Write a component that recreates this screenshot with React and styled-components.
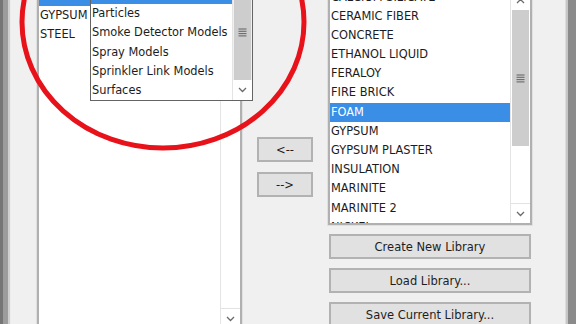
import React from "react";
import styled, { createGlobalStyle } from "styled-components";

const GlobalStyle = createGlobalStyle`
  html, body {
    margin: 0;
    padding: 0;
    overflow: hidden;
    background: #f0f0f0;
  }
  body {
    font-family: "DejaVu Sans", Verdana, sans-serif;
  }
`;

const Screen = styled.div`
  position: relative;
  width: 576px;
  height: 324px;
  display: flex;
  overflow: hidden;
  background: #f0f0f0;
  color: #1c1c1c;
  font-size: 11.4px;
`;

const EdgeLeft = styled.div`
  flex: none;
  width: 11px;
  background: linear-gradient(
    to right,
    #767676 0 3px,
    #9c9c9c 3px 8px,
    #d0d0d0 8px 10px,
    #ebebeb 10px 11px
  );
`;

const EdgeRight = styled.div`
  flex: none;
  width: 11px;
  background: linear-gradient(
    to right,
    #dedede 0 1px,
    #c6c6c6 1px 3px,
    #8b8b8b 3px 11px
  );
`;

const Panel = styled.div`
  flex: 1;
  min-width: 0;
`;

const Columns = styled.div`
  display: grid;
  grid-template-columns: 205px 86px 204px;
  align-items: start;
  margin-top: -10px;
  padding-left: 26px;
`;

const Column = styled.div`
  position: relative;
  display: flex;
  flex-direction: column;
  gap: ${(p) => p.$gap || 0}px;
  padding-top: ${(p) => p.$top || 0}px;
`;

const ListBox = styled.div`
  display: flex;
  height: ${(p) => p.$height}px;
  box-sizing: border-box;
  background: #fff;
  border: 2px solid #b0b0b0;
  box-shadow: 0 0 0 1px #e0e0e0;
  overflow: hidden;
`;

const Rows = styled.div`
  flex: 1;
  min-width: 0;
  margin-top: ${(p) => p.$offset || 0}px;
`;

const Row = styled.div`
  height: 19.2px;
  line-height: 19.2px;
  padding-left: 1px;
  white-space: nowrap;
  overflow: hidden;
  background: ${(p) => (p.$selected ? "#3a8ee6" : "transparent")};
  color: ${(p) => (p.$selected ? "#fff" : "#1c1c1c")};
`;

const ScrollBar = styled.div`
  flex: none;
  width: 19px;
  display: flex;
  flex-direction: column;
  background: ${(p) => p.$track || "#fff"};
  border-left: 1px solid #e4e4e4;
`;

const ArrowBox = styled.div`
  flex: none;
  height: ${(p) => p.$height || 20}px;
  display: flex;
  align-items: center;
  justify-content: center;
  background: #fff;
  border-top: ${(p) => (p.$line ? "1px solid #e2e2e2" : "none")};
  box-sizing: border-box;
`;

const Thumb = styled.div`
  flex: none;
  height: ${(p) => p.$height}px;
  margin: 0 1px;
  background: #cdcdcd;
  display: flex;
  align-items: center;
  justify-content: center;
`;

const Track = styled.div`
  flex: 1;
`;

const Dropdown = styled.div`
  position: absolute;
  top: -6px;
  left: 53px;
  width: 163px;
  height: 117px;
  box-sizing: border-box;
  display: flex;
  background: #fff;
  border: 1px solid #646464;
  z-index: 2;
`;

const Button = styled.button`
  display: block;
  height: 25px;
  width: ${(p) => (p.$small ? "56px" : "auto")};
  margin: ${(p) => (p.$small ? "0 auto" : "0 1px")};
  padding: 0;
  box-sizing: border-box;
  background: #e1e1e1;
  border: 2px solid #b2b2b2;
  font-family: inherit;
  font-size: 11.5px;
  color: #1e1e1e;
  line-height: 20px;
`;

const Overlay = styled.svg`
  position: absolute;
  left: 0;
  top: 0;
  pointer-events: none;
  z-index: 5;
`;

const Chevron = ({ up }) => (
  <svg width="9" height="6" viewBox="0 0 9 6">
    <polyline
      points={up ? "1,5 4.5,1.5 8,5" : "1,1 4.5,4.5 8,1"}
      fill="none"
      stroke="#6a6a6a"
      strokeWidth="1.3"
    />
  </svg>
);

const Grip = () => (
  <svg width="9" height="9" viewBox="0 0 9 9">
    {[1, 3.3, 5.6, 7.9].map((y) => (
      <line key={y} x1="0.5" x2="8.5" y1={y} y2={y} stroke="#6a6a6a" strokeWidth="1.1" />
    ))}
  </svg>
);

const leftItems = ["FOAM", "GYPSUM", "STEEL"];
const dropItems = [
  "Materials",
  "Particles",
  "Smoke Detector Models",
  "Spray Models",
  "Sprinkler Link Models",
  "Surfaces",
];
const rightItems = [
  "CALCIUM SILICATE",
  "CERAMIC FIBER",
  "CONCRETE",
  "ETHANOL LIQUID",
  "FERALOY",
  "FIRE BRICK",
  "FOAM",
  "GYPSUM",
  "GYPSUM PLASTER",
  "INSULATION",
  "MARINITE",
  "MARINITE 2",
  "NICKEL",
];

const App = () => {
  return (
    <Screen>
      <GlobalStyle />
      <EdgeLeft />
      <Panel>
        <Columns>
          <Column>
            <ListBox $height={340}>
              <Rows $offset={-5}>
                {leftItems.map((item) => (
                  <Row key={item} $selected={item === "FOAM"}>
                    {item}
                  </Row>
                ))}
              </Rows>
              <ScrollBar>
                <Track />
                <ArrowBox $line>
                  <Chevron />
                </ArrowBox>
              </ScrollBar>
            </ListBox>
            <Dropdown>
              <Rows>
                {dropItems.map((item) => (
                  <Row key={item} $selected={item === "Materials"}>
                    {item}
                  </Row>
                ))}
              </Rows>
              <ScrollBar $track="#f0f0f0">
                <Thumb $height={95}>
                  <Grip />
                </Thumb>
                <Track />
                <ArrowBox>
                  <Chevron />
                </ArrowBox>
              </ScrollBar>
            </Dropdown>
          </Column>

          <Column $top={147} $gap={10}>
            <Button $small>&lt;--</Button>
            <Button $small>--&gt;</Button>
          </Column>

          <Column $gap={9}>
            <ListBox $height={235}>
              <Rows $offset={-4.5}>
                {rightItems.map((item) => (
                  <Row key={item} $selected={item === "FOAM"}>
                    {item}
                  </Row>
                ))}
              </Rows>
              <ScrollBar>
                <ArrowBox $height={18}>
                  <Chevron up />
                </ArrowBox>
                <Thumb $height={136}>
                  <Grip />
                </Thumb>
                <Track />
                <ArrowBox $line>
                  <Chevron />
                </ArrowBox>
              </ScrollBar>
            </ListBox>
            <Button>Create New Library</Button>
            <Button>Load Library...</Button>
            <Button>Save Current Library...</Button>
          </Column>
        </Columns>
      </Panel>
      <EdgeRight />
      <Overlay width="576" height="324" viewBox="0 0 576 324">
        <ellipse cx="163" cy="22" rx="141" ry="126" fill="none" stroke="#e8121a" strokeWidth="5" />
      </Overlay>
    </Screen>
  );
};

export default App;
